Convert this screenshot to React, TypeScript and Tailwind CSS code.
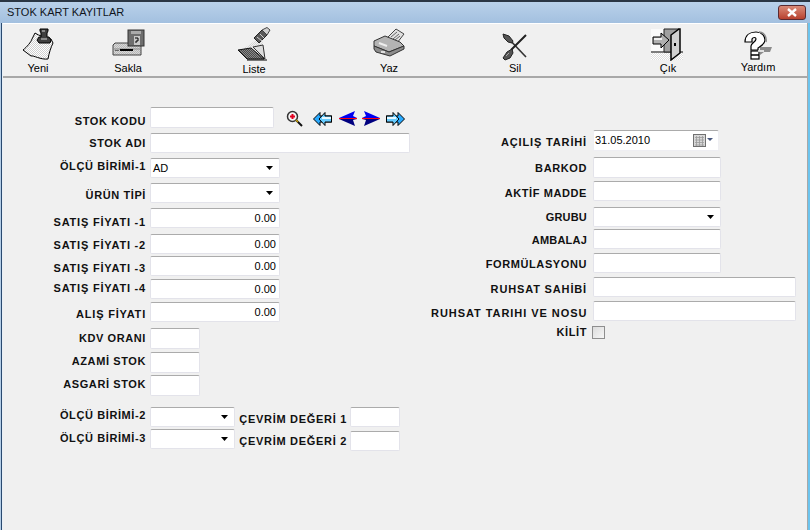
import React from "react";

const Pat = ({ id, a, b }: { id: string; a: string; b: string }) => (
    <pattern id={id} width="2" height="2" patternUnits="userSpaceOnUse">
        <rect width="2" height="2" fill={a} />
        <rect width="1" height="1" fill={b} />
        <rect x="1" y="1" width="1" height="1" fill={b} />
    </pattern>
);

const YeniIcon = () => (
    <svg width="34" height="34" viewBox="0 0 34 34">
        <defs>
            <Pat id="paper" a="#ffffff" b="#d0d0d0" />
        </defs>
        <path d="M14 6 C18 9 24 10 30 12 L32 16 C30 20 28 26 27 32 C20 33 12 28 10 29 L2 23 C6 20 10 15 11 12 Z" fill="url(#paper)" stroke="#000" strokeWidth="1" />
        <path d="M19 2 h8 v2 l-1 2 v4 h2 l2 3 -1 3 h-11 l-2 -3 2 -3 h2 v-4 l-1 -2 z" fill="#3f3f3f" stroke="#000" strokeWidth="1" />
        <path d="M20 11 h6 v2 h-6 z" fill="#8a8a8a" />
        <path d="M21 3 h3 v2 h-3 z" fill="#8a8a8a" />
    </svg>
);

const SaklaIcon = () => (
    <svg width="34" height="34" viewBox="0 -2 34 34">
        <defs>
            <Pat id="drive" a="#d8d8d8" b="#b8b8b8" />
        </defs>
        <path d="M4 14 h26 v12 h-28 v-10 z" fill="url(#drive)" stroke="#444" strokeWidth="1" />
        <path d="M2 20 h28" stroke="#8a8a8a" />
        <rect x="9" y="20" width="13" height="2" fill="#000" />
        <rect x="4" y="21" width="4" height="1" fill="#666" />
        <rect x="17" y="1" width="16" height="16" fill="#6e6e6e" stroke="#333" strokeWidth="1" />
        <rect x="20" y="2" width="10" height="3" fill="#aaaaaa" />
        <rect x="23" y="7" width="6" height="9" fill="#c8c8c8" />
        <path d="M24 9 h3 v3 h-2 v2" fill="none" stroke="#000" strokeWidth="1" />
    </svg>
);

const ListeIcon = () => (
    <svg width="34" height="34" viewBox="0 0 34 34">
        <defs>
            <Pat id="folder" a="#4a4a4a" b="#8a8a8a" />
            <Pat id="cone" a="#f0f0f0" b="#d4d4d4" />
        </defs>
        <path d="M19 13 L6 22 L26 20 L25 9 Z" fill="url(#cone)" />
        <path d="M16 20 L26 18 L28 32 Z" fill="#dcdcdc" stroke="#333" strokeWidth="1" />
        <path d="M1 23 L14 21 L27 32 L10 32 Z" fill="url(#folder)" stroke="#111" strokeWidth="1" />
        <path d="M10 33 H30" stroke="#000" strokeWidth="1" />
        <path d="M17 11 L25 3 L30 8 L22 16 Z" fill="#5a5a5a" stroke="#222" strokeWidth="1" />
        <path d="M25 3 L30 0.5 L33 3 L30 8 Z" fill="#d0d0d0" stroke="#444" strokeWidth="1" />
        <path d="M20 10 L25 14 M23 7 L27 11" stroke="#cfcfcf" />
    </svg>
);

const YazIcon = () => (
    <svg width="34" height="34" viewBox="0 -1 34 34">
        <path d="M14 11 L24 1 L32 6 L25 15 Z" fill="#e0e0e0" stroke="#444" strokeWidth="1" />
        <path d="M19 9 L25 4 M21 11 L27 6 M23 12 L28 8" stroke="#666" strokeWidth="1" />
        <path d="M2 13 L13 8 L28 14 L32 18 L17 24 L2 18 Z" fill="#b4b4b4" stroke="#333" strokeWidth="1" />
        <path d="M2 18 L17 24 L32 18 L32 21 L18 28 L4 24 L2 21 Z" fill="#8c8c8c" stroke="#333" strokeWidth="1" />
        <path d="M7 15 L15 18" stroke="#eeeeee" strokeWidth="2" />
        <rect x="9" y="23" width="4" height="2" fill="#dedede" />
    </svg>
);

const SilIcon = () => (
    <svg width="26" height="28" viewBox="0 0 26 28">
        <path d="M6 5 L24 24" stroke="#333" strokeWidth="1.6" />
        <path d="M1 1 L7 3 L11 8 L10 10 L6 9 L2 5 Z" fill="#555" stroke="#222" />
        <path d="M24 2 L14 12 L9 17" stroke="#222" strokeWidth="2" />
        <path d="M10 16 L5 19 L1 25 L3 27 L8 25 L11 20 Z" fill="#555" stroke="#222" />
        <path d="M4 23 L7 20" stroke="#aaa" />
    </svg>
);

const CikIcon = () => (
    <svg width="34" height="33" viewBox="0 0 34 33">
        <defs>
            <Pat id="floor" a="#ffffff" b="#dedede" />
        </defs>
        <rect x="0" y="1" width="30" height="31" fill="#fafafa" />
        <path d="M0 25 H32 V32 H20 L0 32 Z" fill="url(#floor)" />
        <path d="M0 24 H32" stroke="#000" strokeWidth="1" />
        <path d="M13 1 H28 L28 24 H13 Z" fill="#a0a0a0" stroke="#222" strokeWidth="1" />
        <path d="M20 31 V7 L28 1 H29 V25 L20 32 Z" fill="#d0d0d0" stroke="#000" strokeWidth="1.5" />
        <rect x="23" y="15" width="2" height="3" fill="#000" />
        <path d="M2 9 H10 V5 L18 12 L10 20 V16 H2 Z" fill="#b0b0b0" stroke="#000" strokeWidth="1" />
        <path d="M3 11 H11" stroke="#f0f0f0" strokeWidth="2" />
    </svg>
);

const YardimIcon = () => (
    <svg width="32" height="30" viewBox="0 0 32 30">
        <path d="M18 16 H30 L28 21 H22 L18 24 Z" fill="#8c8c8c" />
        <path d="M3 11 C3 4 8 1 14 1 C20 1 23 5 23 9 C23 13 19 15 16 17 V19 H9 V15 C9 12 14 11 14 8 C14 6 11 6 10 8 V11 Z" fill="#fff" stroke="#000" strokeWidth="1.2" />
        <path d="M17 1 C22 1 25 6 24 11" fill="none" stroke="#888" strokeWidth="1.5" />
        <rect x="9" y="20" width="8" height="8" fill="#fff" stroke="#000" strokeWidth="1.2" />
        <path d="M9 24 H17" stroke="#000" strokeWidth="1.5" />
        <path d="M16 20 H22" stroke="#fff" strokeWidth="1.5" />
    </svg>
);

const ZoomIcon = () => (
    <svg width="18" height="18" viewBox="0 0 18 18">
        <circle cx="6.5" cy="6.5" r="5" fill="#f4f4f4" stroke="#333" strokeWidth="1.5" />
        <path d="M4 6.5 H9 M6.5 4 V9" stroke="#e00020" strokeWidth="2" />
        <path d="M10.5 10.5 L16 16" stroke="#111" strokeWidth="2" />
        <path d="M10 10 L12 12" stroke="#c8a000" strokeWidth="1.5" />
    </svg>
);

const ArrowsIcon = ({ flip }: { flip?: boolean }) => (
    <svg width="19" height="14" viewBox="0 0 19 14" className={flip ? "-scale-x-100" : ""}>
        <path d="M7 0.5 V4 H19 V10 H7 V13.5 L0.5 7 Z" fill="#29aaff" stroke="#000" strokeWidth="1" />
        <path d="M12 0.5 L6 7 L12 13.5 V10 H18.5 V4 H12 Z" fill="#66ccff" stroke="#000" strokeWidth="1" />
        <path d="M9 6 H18" stroke="#e8f8ff" strokeWidth="2" />
    </svg>
);

const PointIcon = ({ flip }: { flip?: boolean }) => (
    <svg width="18" height="15" viewBox="0 0 18 15" className={flip ? "-scale-x-100" : ""}>
        <path d="M16 0 L0 7 H18 L14 5 Z" fill="#0000f0" />
        <path d="M0 8 L16 15 L14 9 L18 8 Z" fill="#000080" />
        <rect x="0" y="7" width="18" height="1" fill="#ff0010" />
    </svg>
);

const CalendarIcon = () => (
    <svg width="21" height="14" viewBox="0 0 21 14">
        <rect x="0.5" y="0.5" width="12" height="12" fill="#d8d8d8" stroke="#707070" />
        <path d="M2 3.5 H11 M2 6 H11 M2 8.5 H11 M2 11 H11 M3.5 2 V12 M6.5 2 V12 M9.5 2 V12" stroke="#9a9a9a" strokeWidth="0.8" />
        <path d="M14 4 H20 L17 7 Z" fill="#4a5a80" />
    </svg>
);

const Caret = () => (
    <svg width="7" height="4" viewBox="0 0 7 4">
        <path d="M0 0 H7 L3.5 4 Z" fill="#000" />
    </svg>
);

const Tool = ({ label, className, labelClass, children }: { label: string; className: string; labelClass: string; children: React.ReactNode }) => (
    <div className={`flex flex-col items-center w-[60px] shrink-0 ${className}`}>
        <div className="h-[36px] flex items-end justify-center">{children}</div>
        <span className={`text-[11px] leading-[13px] text-black ${labelClass}`}>{label}</span>
    </div>
);

const Box = ({ className = "", children }: { className?: string; children?: React.ReactNode }) => (
    <div className={`h-[20px] bg-white rounded-[2px] border border-[#e3e3ea] border-t-[#ababab] flex items-center shrink-0 pl-[2px] text-[11px] text-black ${className}`}>
        {children}
    </div>
);

const Money = ({ value }: { value: string }) => (
    <Box className="w-[130px] justify-end pr-[3px]">{value}</Box>
);

const Select = ({ className = "", value }: { className?: string; value?: string }) => (
    <Box className={`justify-between ${className}`}>
        <span>{value}</span>
        <span className="mr-[6px] flex"><Caret /></span>
    </Box>
);

const Label = ({ text, className = "", track = "tracking-[0.6px]" }: { text: string; className?: string; track?: string }) => (
    <div className={`font-bold text-[11px] leading-[14px] text-[#111] text-right whitespace-nowrap ${track} ${className}`}>
        {text}
    </div>
);

type RowProps = { label: string; labelClass: string; className?: string; track?: string; children: React.ReactNode };

const Row = ({ label, labelClass, className = "", track, children }: RowProps) => (
    <div className={`flex items-start ${className}`}>
        <Label text={label} track={track} className={`w-[143px] mr-[4px] ${labelClass}`} />
        {children}
    </div>
);

const RRow = ({ label, labelClass, className = "", track, children }: RowProps) => (
    <div className={`flex items-start ${className}`}>
        <Label text={label} track={track} className={`w-[156px] mr-[6px] ${labelClass}`} />
        {children}
    </div>
);

export default function App() {
    return (
        <div className="w-[810px] h-[530px] overflow-hidden bg-[#f0f0f0] flex flex-col border-t-[2px] border-t-[#2a3644] font-['Liberation_Sans',Arial,sans-serif]">
            <div className="h-[21px] shrink-0 bg-gradient-to-b from-[#b9d1ea] to-[#a3c0df] flex items-center justify-between pl-[7px] pr-[4px]">
                <span className="text-[11px] text-[#10151c]">STOK KART KAYITLAR</span>
                <div className="w-[28px] h-[15px] rounded-[3px] border border-[#5a2a30] bg-gradient-to-b from-[#d98a78] to-[#b8402e] flex items-center justify-center">
                    <svg width="12" height="9" viewBox="0 0 12 9">
                        <path d="M2 1 L10 8 M10 1 L2 8" stroke="#fff" strokeWidth="2.4" />
                    </svg>
                </div>
            </div>
            <div className="flex-1 flex flex-col px-[3px] min-h-0 shadow-[inset_1px_0_0_#b4cde6,inset_2px_0_0_#2a4a70,inset_3px_0_0_#e8f0f8,inset_-2px_0_0_#6cc4ee,inset_-3px_0_0_#a8a8a8]">
                <div className="h-[55px] shrink-0 border-t border-t-white border-b-[2px] border-b-[#a8a8a8] flex pt-[1px] pl-[5px]">
                    <Tool label="Yeni" className="" labelClass="mt-[1px]"><YeniIcon /></Tool>
                    <Tool label="Sakla" className="ml-[30px]" labelClass="mt-[1px]"><SaklaIcon /></Tool>
                    <Tool label="Liste" className="ml-[66px]" labelClass="mt-[2px]"><ListeIcon /></Tool>
                    <Tool label="Yaz" className="ml-[75px]" labelClass="mt-[1px]"><YazIcon /></Tool>
                    <Tool label="Sil" className="ml-[66px]" labelClass="mt-[1px]"><SilIcon /></Tool>
                    <Tool label="Çık" className="ml-[93px]" labelClass="mt-[1px]"><CikIcon /></Tool>
                    <Tool label="Yardım" className="ml-[30px]" labelClass="mt-0"><YardimIcon /></Tool>
                </div>
                <div className="flex-1 flex items-start">
                    <div className="flex flex-col pt-[29px] w-[407px] shrink-0">
                        <Row label="STOK KODU" labelClass="pt-[7px]">
                            <Box className="w-[124px] h-[21px] border-[#8fb4d0]" />
                            <div className="flex items-start ml-[12px] h-[21px]">
                                <span className="mt-[3px] flex"><ZoomIcon /></span>
                                <span className="ml-[9px] mt-[5px] flex"><ArrowsIcon /></span>
                                <span className="ml-[7px] mt-[4px] flex"><PointIcon /></span>
                                <span className="ml-[5px] mt-[4px] flex"><PointIcon flip /></span>
                                <span className="ml-[6px] mt-[5px] flex"><ArrowsIcon flip /></span>
                            </div>
                        </Row>
                        <Row label="STOK ADI" labelClass="pt-[3px]" className="mt-[5px]"><Box className="w-[260px]" /></Row>
                        <Row label="ÖLÇÜ BİRİMİ-1" labelClass="pt-[1px]" className="mt-[5px]"><Select className="w-[130px]" value="AD" /></Row>
                        <Row label="ÜRÜN TİPİ" labelClass="pt-[5px]" className="mt-[5px]"><Select className="w-[130px]" /></Row>
                        <Row label="SATIŞ FİYATI -1" track="tracking-[0.8px]" labelClass="pt-[7px]" className="mt-[5px]"><Money value="0.00" /></Row>
                        <Row label="SATIŞ FİYATI -2" track="tracking-[0.8px]" labelClass="pt-[4px]" className="mt-[5px]"><Money value="0.00" /></Row>
                        <Row label="SATIŞ FİYATI -3" track="tracking-[0.8px]" labelClass="pt-[5px]" className="mt-[2px]"><Money value="0.00" /></Row>
                        <Row label="SATIŞ FİYATI -4" track="tracking-[0.8px]" labelClass="pt-[2px]" className="mt-[3px]"><Money value="0.00" /></Row>
                        <Row label="ALIŞ FİYATI" track="tracking-[0.8px]" labelClass="pt-[5px]" className="mt-[3px]"><Money value="0.00" /></Row>
                        <Row label="KDV ORANI" labelClass="pt-[3px]" className="mt-[6px]"><Box className="w-[50px] h-[21px]" /></Row>
                        <Row label="AZAMİ STOK" labelClass="pt-[2px]" className="mt-[3px]"><Box className="w-[50px] h-[21px]" /></Row>
                        <Row label="ASGARİ STOK" labelClass="pt-[2px]" className="mt-[2px]"><Box className="w-[50px] h-[21px]" /></Row>
                        <div className="flex mt-[11px]">
                            <div className="flex flex-col">
                                <Row label="ÖLÇÜ BİRİMİ-2" labelClass="pt-[1px]"><Select className="w-[85px]" /></Row>
                                <Row label="ÖLÇÜ BİRİMİ-3" labelClass="pt-[2px]" className="mt-[2px]"><Select className="w-[85px]" /></Row>
                            </div>
                            <div className="flex flex-col ml-[4px]">
                                <div className="flex items-start">
                                    <Label text="ÇEVRİM DEĞERİ 1" track="tracking-[0.7px]" className="w-[108px] pt-[5px] text-left" />
                                    <Box className="w-[50px] ml-[3px]" />
                                </div>
                                <div className="flex items-start mt-[4px]">
                                    <Label text="ÇEVRİM DEĞERİ 2" track="tracking-[0.7px]" className="w-[108px] pt-[3px] text-left" />
                                    <Box className="w-[50px] ml-[3px]" />
                                </div>
                            </div>
                        </div>
                    </div>
                    <div className="flex flex-col pt-[52px] ml-[21px]">
                        <RRow label="AÇILIŞ TARİHİ" track="tracking-[0.85px]" labelClass="pt-[5px]">
                            <Box className="w-[126px] h-[21px] justify-between border-[#eeeef2] !pl-[1px]">
                                31.05.2010
                                <span className="mr-[4px] flex"><CalendarIcon /></span>
                            </Box>
                        </RRow>
                        <RRow label="BARKOD" labelClass="pt-[4px]" className="mt-[6px]"><Box className="w-[128px] h-[21px]" /></RRow>
                        <RRow label="AKTİF MADDE" labelClass="pt-[5px]" className="mt-[3px]"><Box className="w-[128px]" /></RRow>
                        <RRow label="GRUBU" track="tracking-[0.2px]" labelClass="pt-[3px]" className="mt-[6px]"><Select className="w-[128px]" /></RRow>
                        <RRow label="AMBALAJ" track="tracking-[0.2px]" labelClass="pt-[4px]" className="mt-[2px]"><Box className="w-[128px]" /></RRow>
                        <RRow label="FORMÜLASYONU" labelClass="pt-[4px]" className="mt-[4px]"><Box className="w-[128px]" /></RRow>
                        <RRow label="RUHSAT SAHİBİ" track="tracking-[0.85px]" labelClass="pt-[5px]" className="mt-[4px]"><Box className="w-[203px]" /></RRow>
                        <RRow label="RUHSAT TARIHI VE NOSU" track="tracking-[0.95px]" labelClass="pt-[5px]" className="mt-[4px]"><Box className="w-[203px]" /></RRow>
                        <div className="flex items-start mt-[5px]">
                            <Label text="KİLİT" className="w-[156px] mr-[5px] -mt-[1px]" />
                            <div className="w-[13px] h-[13px] border border-[#8e8e8e] bg-gradient-to-br from-[#dcdcdc] to-[#f6f6f6]" />
                        </div>
                    </div>
                </div>
            </div>
        </div>
    );
}
